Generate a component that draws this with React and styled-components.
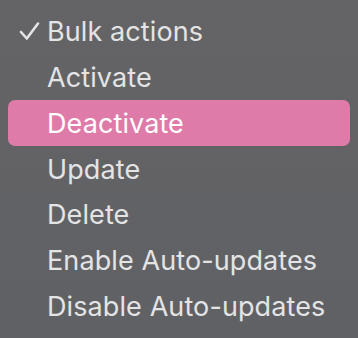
import React from "react";
import styled, { createGlobalStyle } from "styled-components";

const Global = createGlobalStyle`
  html, body { margin: 0; padding: 0; background: #626366; }
  #root { width: 358px; height: 338px; }
`;

const Menu = styled.ul`
  list-style: none;
  margin: 0;
  padding: 9px 8px;
  box-sizing: border-box;
  width: 358px;
  height: 338px;
  background: linear-gradient(#646466, #606165);
  display: flex;
  flex-direction: column;
  font-family: Inter, "Noto Sans", sans-serif;
  font-size: 27px;
  letter-spacing: 0.1px;
`;

const Item = styled.li`
  height: 46px;
  display: flex;
  align-items: center;
  padding-left: 11px;
  border-radius: 7px;
  color: ${(p) => (p.$active ? "#ffffff" : "#e4e4e5")};
  background: ${(p) => (p.$active ? "#df7ba8" : "transparent")};
`;

const Check = styled.span`
  width: 28px;
  display: flex;
  align-items: center;
`;

const items = [
  "Bulk actions",
  "Activate",
  "Deactivate",
  "Update",
  "Delete",
  "Enable Auto-updates",
  "Disable Auto-updates",
];

export default function App() {
  return (
    <>
      <Global />
      <Menu>
        {items.map((t, i) => (
          <Item key={t} $active={t === "Deactivate"}>
            <Check>
              {i === 0 && (
                <svg width="21" height="19" viewBox="0 0 21 19">
                  <path d="M2 10 L7.8 16.5 L19 1.5" fill="none" stroke="#e4e4e5" strokeWidth="2.6" strokeLinecap="round" strokeLinejoin="round" />
                </svg>
              )}
            </Check>
            {t}
          </Item>
        ))}
      </Menu>
    </>
  );
}
